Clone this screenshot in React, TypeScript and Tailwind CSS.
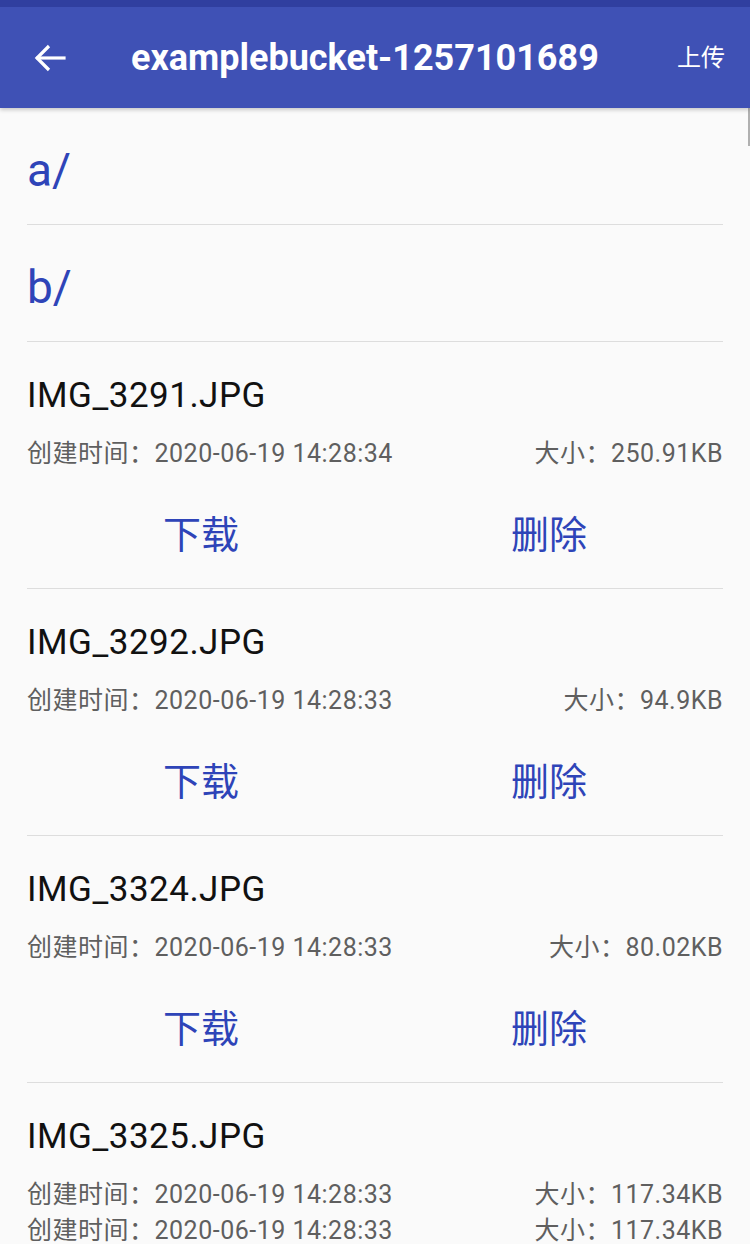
const files = [
  { name: "IMG_3291.JPG", time: "2020-06-19 14:28:34", size: "250.91KB" },
  { name: "IMG_3292.JPG", time: "2020-06-19 14:28:33", size: "94.9KB" },
  { name: "IMG_3324.JPG", time: "2020-06-19 14:28:33", size: "80.02KB" },
  { name: "IMG_3325.JPG", time: "2020-06-19 14:28:33", size: "117.34KB" },
];

const folders = ["a/", "b/"];

const font = "font-['Roboto','Noto_Sans_CJK_SC',sans-serif]";

function InfoLine({ time, size }: { time: string; size: string }) {
  return (
    <div className="flex h-[36px] items-center justify-between text-[25px] tracking-[0.5px] text-[#5f5f5f]">
      <span>创建时间：{time}</span>
      <span>大小：{size}</span>
    </div>
  );
}

export default function App() {
  return (
    <div className={`relative h-[1244px] w-[750px] overflow-hidden bg-[#fafafa] ${font}`}>
      {/* toolbar */}
      <header className="relative z-10 bg-[#3f51b5] shadow-[0_2px_4px_rgba(0,0,0,0.2)]">
        <div className="h-[7px] bg-[#303f9f]" />
        <div className="flex h-[101px] items-center text-white">
          <button className="flex w-[131px] items-center pl-[33px]">
            <svg width="34" height="34" viewBox="0 0 34 34" fill="none" stroke="white" strokeWidth="3.2" strokeLinecap="square">
              <path d="M31 17 H5" />
              <path d="M16 5 L4 17 L16 29" strokeLinecap="butt" />
            </svg>
          </button>
          <h1 className="flex-1 text-[36px] font-bold">examplebucket-1257101689</h1>
          <span className="pr-[25px] text-[24px]">上传</span>
        </div>
      </header>

      {/* scrollbar hint */}
      <div className="absolute right-0 top-[108px] h-[38px] w-[2px] bg-[#b0b0b0]" />

      <main className="px-[27px]">
        {folders.map((f) => (
          <div
            key={f}
            className="flex h-[117px] items-center border-b border-[#dddddd] pt-[8px] text-[46px] text-[#2e44b8]"
          >
            {f}
          </div>
        ))}

        {files.map((f, i) => {
          const last = i === files.length - 1;
          return (
            <div key={f.name} className="border-b border-[#dddddd]">
              <div className="mt-[34px] flex h-[40px] items-center text-[35px] tracking-[0.5px] text-[#111111]">
                {f.name}
              </div>
              <div className="mt-[20px]">
                <InfoLine time={f.time} size={f.size} />
                {last && <InfoLine time={f.time} size={f.size} />}
              </div>
              {!last && (
                <div className="mt-[27px] mb-[17px] flex h-[72px] text-[38px] text-[#2e44b8]">
                  <button className="flex flex-1 items-center justify-center">下载</button>
                  <button className="flex flex-1 items-center justify-center">删除</button>
                </div>
              )}
            </div>
          );
        })}
      </main>
    </div>
  );
}
